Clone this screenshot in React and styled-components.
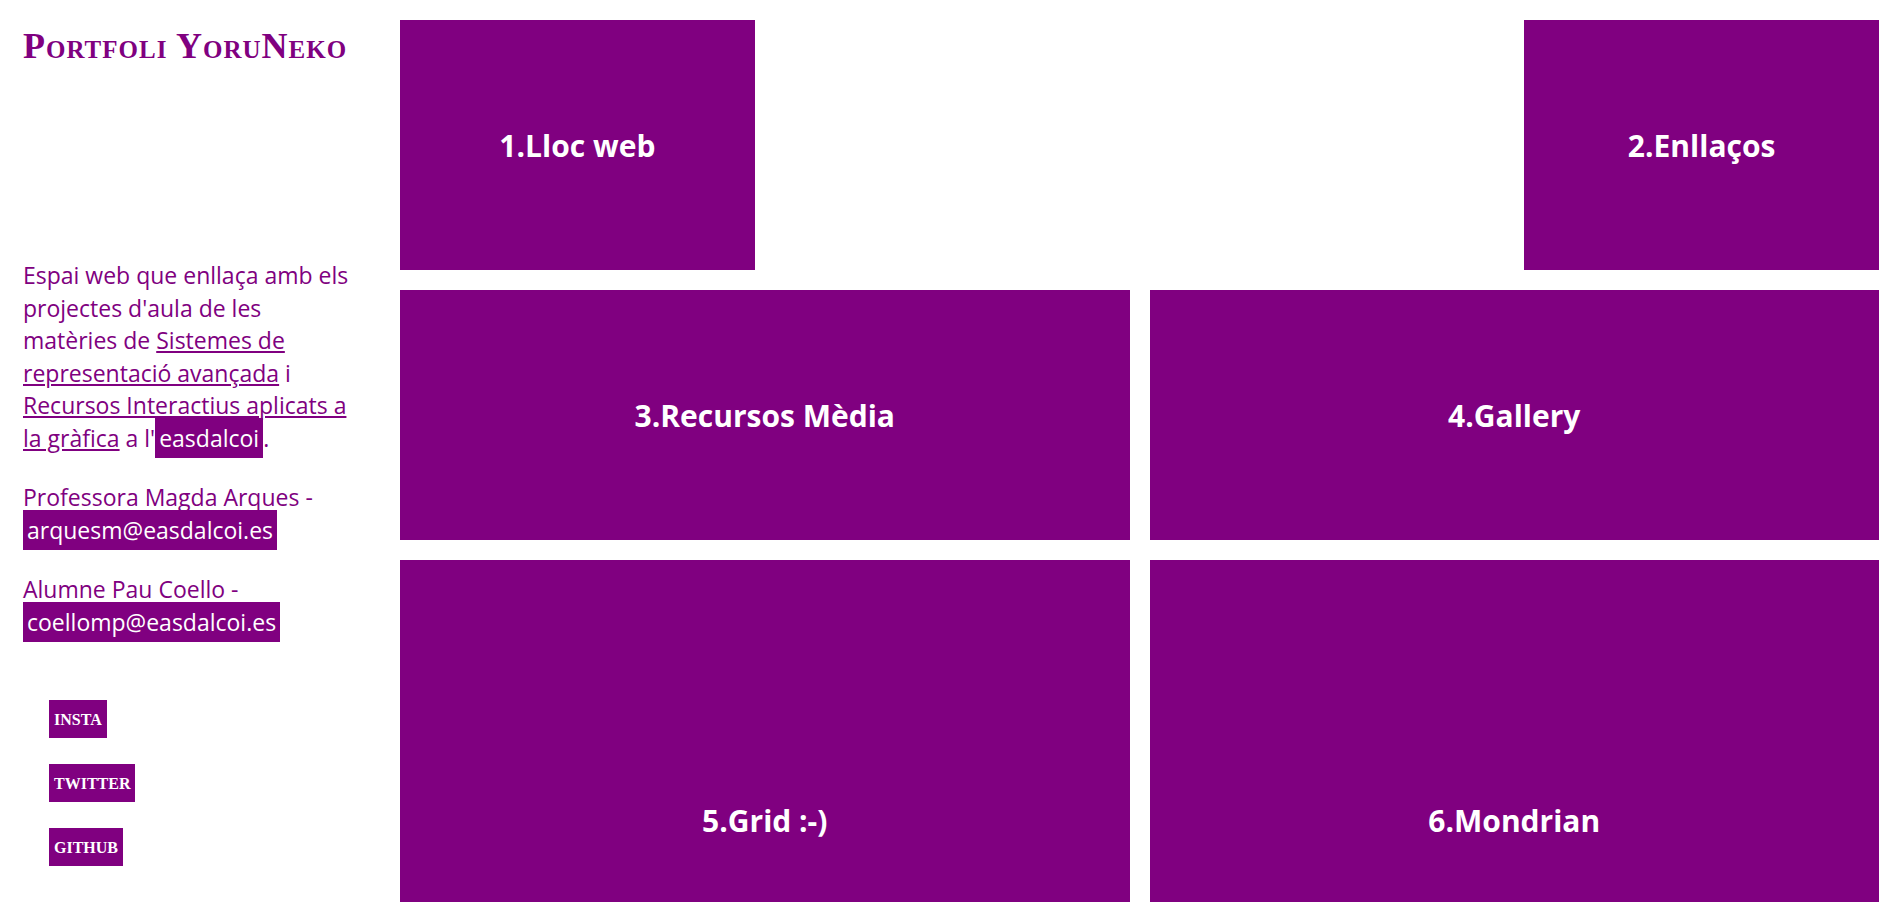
import styled, { createGlobalStyle } from 'styled-components'

const purple = '#800080'

const GlobalStyle = createGlobalStyle`
  html, body {
    margin: 0;
    padding: 0;
    overflow: hidden;
    background: #fff;
  }
  body {
    font-family: "Open Sans", "Liberation Sans", sans-serif;
  }
`

const tiles = [
  { n: 1, label: 'Lloc web', col: '1 / 2', row: '1 / 2' },
  { n: 2, label: 'Enllaços', col: '4 / 5', row: '1 / 2' },
  { n: 3, label: 'Recursos Mèdia', col: '1 / 3', row: '2 / 3' },
  { n: 4, label: 'Gallery', col: '3 / 5', row: '2 / 3' },
  { n: 5, label: 'Grid :-)', col: '1 / 3', row: '3 / 5' },
  { n: 6, label: 'Mondrian', col: '3 / 5', row: '3 / 5' }
]

const socials = ['insta', 'twitter', 'github']

export default function App () {
  return (
    <>
      <GlobalStyle />
      <Page>
        <Sidebar>
          <Title>Portfoli YoruNeko</Title>
          <Intro>
            Espai web que enllaça amb els projectes d'aula de les matèries de{' '}
            <Link href='#'>Sistemes de representació avançada</Link> i{' '}
            <Link href='#'>Recursos Interactius aplicats a la gràfica</Link> a l'
            <Tag>easdalcoi</Tag>.
          </Intro>
          <Contact>
            Professora Magda Arques -<br />
            <Tag>arquesm@easdalcoi.es</Tag>
          </Contact>
          <Contact>
            Alumne Pau Coello -<br />
            <Tag>coellomp@easdalcoi.es</Tag>
          </Contact>
          <Socials>
            {socials.map((s) => (
              <SocialButton key={s} href='#'>{s}</SocialButton>
            ))}
          </Socials>
        </Sidebar>

        <Grid>
          {tiles.map((t) => (
            <Tile key={t.n} $col={t.col} $row={t.row}>
              {t.n}.{t.label}
            </Tile>
          ))}
        </Grid>
      </Page>
    </>
  )
}

const Page = styled.div`
  display: grid;
  grid-template-columns: 380px 1fr;
  gap: 20px;
  padding: 20px 22px 20px 0;
  min-height: 100vh;
  box-sizing: border-box;
`

const Sidebar = styled.aside`
  padding-left: 23px;
  color: ${purple};
`

const Title = styled.h1`
  margin: 6px 0 0;
  font-family: "Liberation Serif", "DejaVu Serif", serif;
  font-variant: small-caps;
  font-weight: bold;
  font-size: 36px;
  line-height: 40px;
  letter-spacing: 1px;
  color: ${purple};
  white-space: nowrap;
`

const Intro = styled.p`
  margin: 193px 0 0;
  width: 330px;
  font-size: 23px;
  line-height: 32.5px;
`

const Link = styled.a`
  color: ${purple};
  text-decoration: underline;
`

const Tag = styled.span`
  background: ${purple};
  color: #fff;
  padding: 4px 4px;
`

const Contact = styled.p`
  margin: 27px 0 0;
  font-size: 23px;
  line-height: 32.5px;
`

const Socials = styled.nav`
  display: flex;
  flex-direction: column;
  align-items: flex-start;
  gap: 26px;
  margin: 62px 0 0 26px;
`

const SocialButton = styled.a`
  display: block;
  background: ${purple};
  color: #fff;
  text-decoration: none;
  font-family: "Liberation Serif", "DejaVu Serif", serif;
  font-weight: bold;
  font-size: 16px;
  text-transform: uppercase;
  height: 38px;
  line-height: 40px;
  padding: 0 5px;
`

const Grid = styled.main`
  display: grid;
  grid-template-columns: repeat(4, 1fr);
  grid-auto-rows: 250px;
  gap: 20px;
`

const Tile = styled.a`
  grid-column: ${({ $col }) => $col};
  grid-row: ${({ $row }) => $row};
  display: flex;
  align-items: center;
  justify-content: center;
  background: ${purple};
  color: #fff;
  font-weight: 700;
  font-size: 30px;
  text-decoration: none;
`
